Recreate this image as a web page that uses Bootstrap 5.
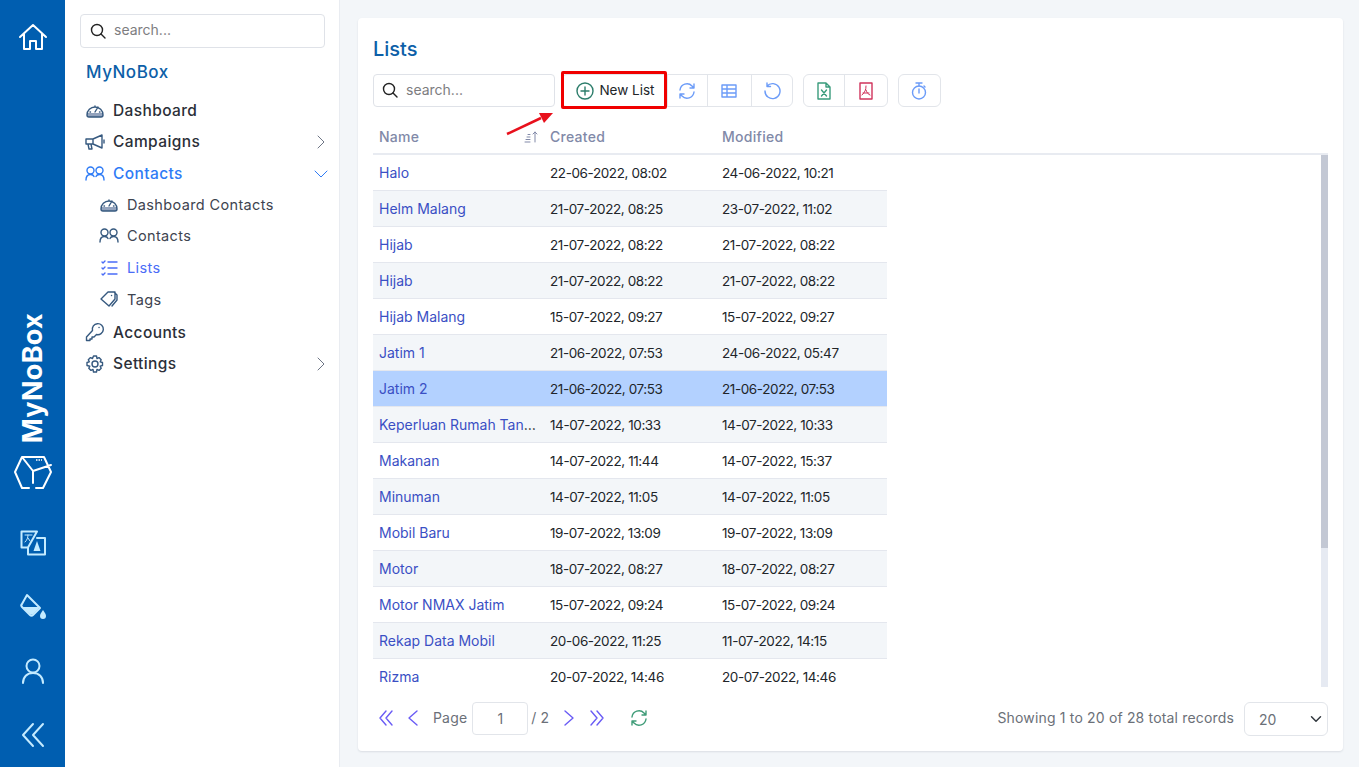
<!DOCTYPE html>
<html lang="en">
<head>
    <meta charset="UTF-8">
    <meta name="viewport" content="width=device-width, initial-scale=1.0">
    <title>Lists - MyNoBox</title>
    <link href="https://cdn.jsdelivr.net/npm/bootstrap@5.3.0/dist/css/bootstrap.min.css" rel="stylesheet">
    <style>
        body { background: #f3f6f9; font-family: Inter, "Liberation Sans", sans-serif; color: #212529; height: 100vh; overflow: hidden; }
        svg { display: block; flex-shrink: 0; }
        .ln { fill: none; stroke: currentColor; stroke-width: 1.4; stroke-linecap: round; stroke-linejoin: round; }
        .ln2 { fill: none; stroke: currentColor; stroke-width: 2; stroke-linecap: round; stroke-linejoin: round; }
        .ln1 { fill: none; stroke: currentColor; stroke-width: 1; stroke-linecap: round; stroke-linejoin: round; }

        /* icon rail */
        .rail { width: 65px; background: #005eb0; color: #fff; }
        .rail-btn { height: 64px; color: #c4ebff; }
        .rail-home { height: 74px; color: #fff; }
        .rail-name { writing-mode: vertical-rl; transform: rotate(180deg); font-size: 27px; font-weight: 700; line-height: 1; letter-spacing: .01em; margin-bottom: 12px; }
        .rail-mid { padding-bottom: 21px; }

        /* side menu */
        .side { width: 275px; background: #fff; border-right: 1px solid #e9ecf1; padding: 14px 14px 0 15px; }
        .side-search { height: 34px; border: 1px solid #dfe2e8; border-radius: 4px; padding: 0 9px 3px; color: #7d7d80; font-size: 14px; }
        .side-brand { color: #0d5fa8; font-size: 17px; font-weight: 500; margin: 12px 0 11px 6px; line-height: 24px; letter-spacing: .03em; }
        .menu-item { height: 31.7px; color: #2b2f38; font-size: 15.5px; font-weight: 450; padding-left: 5px; letter-spacing: .025em; padding-bottom: 1px; }
        .menu-item svg.mi { width: 20px; height: 20px; margin-right: 8px; color: #36597f; }
        .menu-item.on, .menu-item.on svg.mi { color: #2e7bf6; }
        .menu-item .chev { margin-left: auto; margin-right: -3px; color: #6d7585; }
        .menu-item.on .chev { color: #2e7bf6; }
        .menu-sub { font-size: 14.5px; font-weight: 400; padding-left: 19px; color: #3e4450; padding-bottom: 3px; }
        .menu-sub.on, .menu-sub.on svg.mi { color: #4a6cf7; }

        /* main card */
        .main { padding: 18px 16px 16px 18px; min-width: 0; }
        .panel { background: #fff; border-radius: 4px; box-shadow: 0 1px 2px rgba(40, 50, 70, .12); padding: 18px 15px 14px 15px; height: 733px; }
        .panel-title { color: #0d5fa8; font-size: 20px; font-weight: 500; line-height: 26px; margin: 0 0 12px; }
        .bar { height: 33px; }
        .bar-search { width: 182px; height: 33px; border: 1px solid #dfe2e8; border-radius: 4px; padding: 0 8px 2px; color: #7d7d80; font-size: 14px; margin-right: 6px; gap: 8px; }
        .tool-group { border: 1px solid #e2e5ea; border-radius: 6px; height: 33px; margin-right: 10px; }
        .tool { height: 31px; border-right: 1px solid #e2e5ea; color: #6c9cf8; padding-right: 1px; }
        .tool:last-child { border-right: 0; }
        .tool-new { width: 106px; color: #212529; font-size: 13.5px; gap: 5px; padding-left: 3px; }
        .annot-box { position: absolute; left: 188px; top: -3px; width: 106px; height: 38px; border: 3px solid #f00000; border-radius: 2px; }
        .annot-arrow { position: absolute; left: 132px; top: 36px; }

        /* table */
        .head-row { height: 38px; border-bottom: 2px solid #e8ebf1; color: #8189a8; font-size: 14px; font-weight: 500; margin-top: 10px; padding-top: 3px; letter-spacing: .02em; }
        .cell-name { width: 171px; padding-left: 6px; }
        .cell-date { width: 172px; padding-left: 6px; }
        .rows-wrap { height: 532px; }
        .rows { overflow: hidden; }
        .scroll-track { width: 7px; background: #e6eaf2; }
        .scroll-thumb { background: #c3c8d4; }
        .list-table { width: 514px; table-layout: fixed; margin: 0; font-size: 14px; border-collapse: separate; border-spacing: 0; }
        .list-table td { height: 36px; padding: 1px 6px 0; vertical-align: middle; border-bottom: 1px solid #e4e7ee; color: #212529; background: transparent; box-shadow: none; white-space: nowrap; font-size: 13.5px; letter-spacing: -.4px; }
        .list-table td:first-child { padding: 0 8px 0 6px; font-size: 14px; letter-spacing: 0; overflow: hidden; text-overflow: ellipsis; }
        .list-table a { color: #3a4fc4; text-decoration: none; }
        .list-table tr:nth-child(even) td { background: #f3f6f9; }
        .list-table tr.picked td { background: #b3d1ff; }

        /* footer */
        .foot { height: 34px; margin-top: 15px; color: #6b7078; font-size: 14px; letter-spacing: .012em; }
        .foot > span, .foot > svg { margin-bottom: 3px; }
        .pager-icon { color: #6a5cf5; }
        .page-box { width: 56px; height: 33px; border: 1px solid #e2e5ea; border-radius: 4px; text-align: center; color: #6b7078; font-size: 14px; padding: 0; margin: 0 3px 1px 5px; }
        .size-box { width: 84px; height: 34px; border-color: #e2e5ea; font-size: 14px; color: #6b7078; padding: 0 0 0 14px; background-position: right 3px center; margin-left: 10px; }
    </style>
</head>
<body class="d-flex">

<!-- Icon rail -->
<div class="rail d-flex flex-column align-items-center flex-shrink-0">
    <div class="rail-home d-flex align-items-center justify-content-center w-100">
        <svg width="30" height="28" viewBox="0 0 30 28"><path class="ln2" d="M2 14 15 2l13 12M6 11v15h6v-8h6v8h6V11"/></svg>
    </div>
    <div class="flex-grow-1 d-flex flex-column justify-content-end align-items-center rail-mid">
        <div class="rail-name">MyNoBox</div>
        <svg width="38" height="35" viewBox="0 0 38 35"><path class="ln2" d="M8 2h22l7 15-8 16h-7M15 33H8L1 17 8 2l11 14 18-6M19 16v12"/><path d="M22 5h6" stroke="currentColor" stroke-width="1.500" stroke-dasharray="1.500 1"/></svg>
    </div>
    <div class="rail-btn d-flex align-items-center justify-content-center w-100">
        <svg width="26" height="26" viewBox="0 0 26 26"><path class="ln2" d="M8 17.500H1.500v-16H17L8 17.500v7h17V8h-8"/><path class="ln1" d="M5 5h7M8 5c0 3-1 5-3 7M8 8l2 3"/><path d="M17 11l3.500 10h-7z" fill="currentColor"/></svg>
    </div>
    <div class="rail-btn d-flex align-items-center justify-content-center w-100">
        <svg width="28" height="28" viewBox="0 0 28 28"><path class="ln2" d="M8 2 21 15l-7 7c-1 1-2 1-3 0l-8-8c-1-1-1-2 0-3z"/><path d="M3 14h18l-7 7c-1 1-2 1-3 0z" fill="currentColor"/><path d="M24 17c2 3 3 4 3 6a3 3 0 0 1-6 0c0-2 1-3 3-6z" fill="currentColor"/></svg>
    </div>
    <div class="rail-btn d-flex align-items-center justify-content-center w-100">
        <svg width="24" height="26" viewBox="0 0 24 26"><circle class="ln2" cx="12" cy="8" r="6.500"/><path class="ln2" d="M2 25c0-6 4-10 10-10s10 4 10 10"/></svg>
    </div>
    <div class="rail-btn d-flex align-items-center justify-content-center w-100">
        <svg width="24" height="26" viewBox="0 0 24 26"><path class="ln2" d="M12 2 2 13l10 11M22 2 12 13l10 11"/></svg>
    </div>
</div>

<!-- Side menu -->
<div class="side flex-shrink-0">
    <div class="side-search d-flex align-items-center gap-2">
        <svg width="16" height="16" viewBox="0 0 16 16" style="color:#222;margin-top:3px"><circle class="ln" cx="7" cy="7" r="5.500"/><path class="ln" d="m11 11 4 4"/></svg>
        <span>search...</span>
    </div>
    <div class="side-brand">MyNoBox</div>

    <div class="menu-item d-flex align-items-center">
        <svg class="mi" viewBox="0 0 20 20"><path d="M2 13h16v2.500c0 .8-.7 1.500-1.500 1.500h-13c-.8 0-1.500-.7-1.500-1.500z" fill="#93a3bd"/><path class="ln" d="M2 15a8 8 0 1 1 16 0c0 1.500-1 2-2 2H4c-1 0-2-.5-2-2zM10 12l3-5M5 12h.5M10 6v.5M14.500 12h.5"/></svg>Dashboard
    </div>
    <div class="menu-item d-flex align-items-center">
        <svg class="mi" viewBox="0 0 20 20"><path class="ln" d="M1 7h7l9-4v13l-9-4H1zM8 7v5M3 12l1 5h3l-1-5M19 8v3"/></svg>Campaigns
        <svg class="chev" width="14" height="14" viewBox="0 0 14 14"><path class="ln1" d="m4 1 6 6-6 6"/></svg>
    </div>
    <div class="menu-item on d-flex align-items-center">
        <svg class="mi" viewBox="0 0 20 20"><circle class="ln" cx="5.500" cy="6.500" r="3.500"/><circle class="ln" cx="14.500" cy="6.500" r="3.500"/><path class="ln" d="M1 16c0-3 1.500-5.500 4.500-5.500 1.500 0 3 .6 3.500 2M19 16c0-3-1.500-5.500-4.500-5.500-1.500 0-3 .6-3.500 2"/></svg>Contacts
        <svg class="chev" width="14" height="14" viewBox="0 0 14 14"><path class="ln1" d="m1 4 6 6 6-6"/></svg>
    </div>
    <div class="menu-item menu-sub d-flex align-items-center">
        <svg class="mi" viewBox="0 0 20 20"><path d="M2 13h16v2.500c0 .8-.7 1.500-1.500 1.500h-13c-.8 0-1.500-.7-1.500-1.500z" fill="#93a3bd"/><path class="ln" d="M2 15a8 8 0 1 1 16 0c0 1.500-1 2-2 2H4c-1 0-2-.5-2-2zM10 12l3-5M5 12h.5M10 6v.5M14.500 12h.5"/></svg>Dashboard Contacts
    </div>
    <div class="menu-item menu-sub d-flex align-items-center">
        <svg class="mi" viewBox="0 0 20 20"><circle class="ln" cx="5.500" cy="6.500" r="3.500"/><circle class="ln" cx="14.500" cy="6.500" r="3.500"/><path class="ln" d="M1 16c0-3 1.500-5.500 4.500-5.500 1.500 0 3 .6 3.500 2M19 16c0-3-1.500-5.500-4.500-5.500-1.500 0-3 .6-3.500 2"/></svg>Contacts
    </div>
    <div class="menu-item menu-sub on d-flex align-items-center">
        <svg class="mi" viewBox="0 0 20 20"><path class="ln" d="M9 4h9M9 10h9M9 16h9M3 4l1 1 2-2M3 10l1 1 2-2M3 16l1 1 2-2"/></svg>Lists
    </div>
    <div class="menu-item menu-sub d-flex align-items-center">
        <svg class="mi" viewBox="0 0 20 20"><path class="ln" d="M2 10 9 3h7v7l-6 7zM15.500 3.500 18 6v5l-5 6M12.500 6.500h.1"/></svg>Tags
    </div>
    <div class="menu-item d-flex align-items-center">
        <svg class="mi" viewBox="0 0 20 20"><path class="ln" d="M7.500 8.500a5.500 5.500 0 1 1 4 4L9 15H7v2H5v1.500H1.500V15zM14 5.500h.1"/></svg>Accounts
    </div>
    <div class="menu-item d-flex align-items-center">
        <svg class="mi" viewBox="0 0 20 20"><circle class="ln" cx="10" cy="10" r="3"/><path class="ln" d="M8.500 2h3l.5 2.500 2-.9 2.200 2.200-1 2 2.300.7v3l-2.300.7 1 2-2.200 2.200-2-1-.5 2.600h-3l-.5-2.600-2 1-2.200-2.200 1-2L2 11.500v-3l2.300-.7-1-2 2.200-2.200 2 .9z"/></svg>Settings
        <svg class="chev" width="14" height="14" viewBox="0 0 14 14"><path class="ln1" d="m4 1 6 6-6 6"/></svg>
    </div>
</div>

<!-- Main content -->
<div class="main flex-grow-1">
    <div class="panel">
        <h1 class="panel-title">Lists</h1>

        <div class="bar d-flex position-relative">
            <div class="bar-search d-flex align-items-center">
                <svg width="16" height="16" viewBox="0 0 16 16" style="color:#222"><circle class="ln" cx="7" cy="7" r="5.500"/><path class="ln" d="m11 11 4 4"/></svg>
                <span>search...</span>
            </div>
            <div class="tool-group d-flex">
                <div class="tool tool-new d-flex align-items-center justify-content-center">
                    <svg width="18" height="18" viewBox="0 0 18 18" style="color:#2c7d6b"><circle class="ln" cx="9" cy="9" r="8"/><path class="ln" d="M9 5v8M5 9h8"/></svg>New List
                </div>
                <div class="tool d-flex align-items-center justify-content-center" style="width:40px">
                    <svg width="18" height="18" viewBox="0 0 18 18"><path class="ln" d="M2 8a7 7 0 0 1 12-4l2 2M16 2v4h-4M16 10a7 7 0 0 1-12 4l-2-2M2 16v-4h4"/></svg>
                </div>
                <div class="tool d-flex align-items-center justify-content-center" style="width:44px">
                    <svg width="18" height="16" viewBox="0 0 18 16"><path class="ln" d="M2 2h14v12H2zM2 6h14M2 10h14M7 2v12"/></svg>
                </div>
                <div class="tool d-flex align-items-center justify-content-center" style="width:40px">
                    <svg width="18" height="18" viewBox="0 0 18 18"><path class="ln" d="M4 4a7.500 7.500 0 1 1-2 5M4 1v3.500h3.500"/></svg>
                </div>
            </div>
            <div class="tool-group d-flex">
                <div class="tool d-flex align-items-center justify-content-center" style="width:41px">
                    <svg width="14" height="18" viewBox="0 0 14 18" style="color:#3a9c7c"><path class="ln" d="M1 1h8l4 4v12H1zM9 1v4h4"/><path class="ln" d="m4.500 8 5 6M9.500 8l-5 6"/></svg>
                </div>
                <div class="tool d-flex align-items-center justify-content-center" style="width:42px">
                    <svg width="14" height="18" viewBox="0 0 14 18" style="color:#d0345c"><path class="ln" d="M1 1h12v16H1z"/><path class="ln1" d="M7 4c0 4-1 6-4 9M7 8c1 3 2 4 4 5M4 11h6"/></svg>
                </div>
            </div>
            <div class="tool-group d-flex">
                <div class="tool d-flex align-items-center justify-content-center" style="width:41px">
                    <svg width="16" height="18" viewBox="0 0 16 18"><circle class="ln" cx="8" cy="10.500" r="6.500"/><path class="ln" d="M5 1h6M8 1v3M8 7v4M13 4l1 1"/></svg>
                </div>
            </div>
            <div class="annot-box"></div>
            <svg class="annot-arrow" width="50" height="26" viewBox="0 0 50 26"><path d="M2 24 36 8" stroke="#e8101c" stroke-width="2.500"/><path d="M48 3 34 3l5 10z" fill="#e8101c"/></svg>
        </div>

        <div class="head-row d-flex align-items-center">
            <div class="cell-name d-flex align-items-center">Name
                <svg class="ms-auto" style="margin-right:6px;color:#8189a8" width="14" height="14" viewBox="0 0 14 14"><path class="ln1" d="M1 12h5M2 9.500h4M3 7h3M4 4.500h2M11 12V2M9 4l2-2 2 2"/></svg>
            </div>
            <div class="cell-date">Created</div>
            <div class="cell-date">Modified</div>
        </div>

        <div class="rows-wrap d-flex">
            <div class="rows flex-grow-1">
                <table class="list-table">
                    <colgroup><col style="width:171px"><col style="width:172px"><col style="width:171px"></colgroup>
                    <tbody>
                    <tr><td><a href="#">Halo</a></td><td>22-06-2022, 08:02</td><td>24-06-2022, 10:21</td></tr>
                    <tr><td><a href="#">Helm Malang</a></td><td>21-07-2022, 08:25</td><td>23-07-2022, 11:02</td></tr>
                    <tr><td><a href="#">Hijab</a></td><td>21-07-2022, 08:22</td><td>21-07-2022, 08:22</td></tr>
                    <tr><td><a href="#">Hijab</a></td><td>21-07-2022, 08:22</td><td>21-07-2022, 08:22</td></tr>
                    <tr><td><a href="#">Hijab Malang</a></td><td>15-07-2022, 09:27</td><td>15-07-2022, 09:27</td></tr>
                    <tr><td><a href="#">Jatim 1</a></td><td>21-06-2022, 07:53</td><td>24-06-2022, 05:47</td></tr>
                    <tr class="picked"><td><a href="#">Jatim 2</a></td><td>21-06-2022, 07:53</td><td>21-06-2022, 07:53</td></tr>
                    <tr><td><a href="#">Keperluan Rumah Tangga</a></td><td>14-07-2022, 10:33</td><td>14-07-2022, 10:33</td></tr>
                    <tr><td><a href="#">Makanan</a></td><td>14-07-2022, 11:44</td><td>14-07-2022, 15:37</td></tr>
                    <tr><td><a href="#">Minuman</a></td><td>14-07-2022, 11:05</td><td>14-07-2022, 11:05</td></tr>
                    <tr><td><a href="#">Mobil Baru</a></td><td>19-07-2022, 13:09</td><td>19-07-2022, 13:09</td></tr>
                    <tr><td><a href="#">Motor</a></td><td>18-07-2022, 08:27</td><td>18-07-2022, 08:27</td></tr>
                    <tr><td><a href="#">Motor NMAX Jatim</a></td><td>15-07-2022, 09:24</td><td>15-07-2022, 09:24</td></tr>
                    <tr><td><a href="#">Rekap Data Mobil</a></td><td>20-06-2022, 11:25</td><td>11-07-2022, 14:15</td></tr>
                    <tr><td><a href="#">Rizma</a></td><td>20-07-2022, 14:46</td><td>20-07-2022, 14:46</td></tr>
                    </tbody>
                </table>
            </div>
            <div class="scroll-track flex-shrink-0"><div class="scroll-thumb" style="height:393px"></div></div>
        </div>

        <div class="foot d-flex align-items-center">
            <svg class="pager-icon" style="margin-left:6px;margin-right:15px" width="14" height="16" viewBox="0 0 14 16"><path class="ln" d="M7 1 1 8l6 7M13 1 7 8l6 7"/></svg>
            <svg class="pager-icon" style="margin-right:15px" width="10" height="16" viewBox="0 0 10 16"><path class="ln" d="M9 1 1 8l8 7"/></svg>
            <span>Page</span>
            <input class="page-box" value="1">
            <span>/ 2</span>
            <svg class="pager-icon" style="margin-left:15px;margin-right:16px" width="10" height="16" viewBox="0 0 10 16"><path class="ln" d="m1 1 8 7-8 7"/></svg>
            <svg class="pager-icon" style="margin-right:26px" width="14" height="16" viewBox="0 0 14 16"><path class="ln" d="m1 1 6 7-6 7M7 1l6 7-6 7"/></svg>
            <svg width="18" height="18" viewBox="0 0 18 18" style="color:#3f9c78"><path class="ln" d="M2 8a7 7 0 0 1 12-4l2 2M16 2v4h-4M16 10a7 7 0 0 1-12 4l-2-2M2 16v-4h4"/></svg>
            <span class="ms-auto">Showing 1 to 20 of 28 total records</span>
            <select class="form-select size-box">
                <option>20</option>
                <option>50</option>
            </select>
        </div>
    </div>
</div>

<script src="https://cdn.jsdelivr.net/npm/bootstrap@5.3.0/dist/js/bootstrap.bundle.min.js"></script>
</body>
</html>
